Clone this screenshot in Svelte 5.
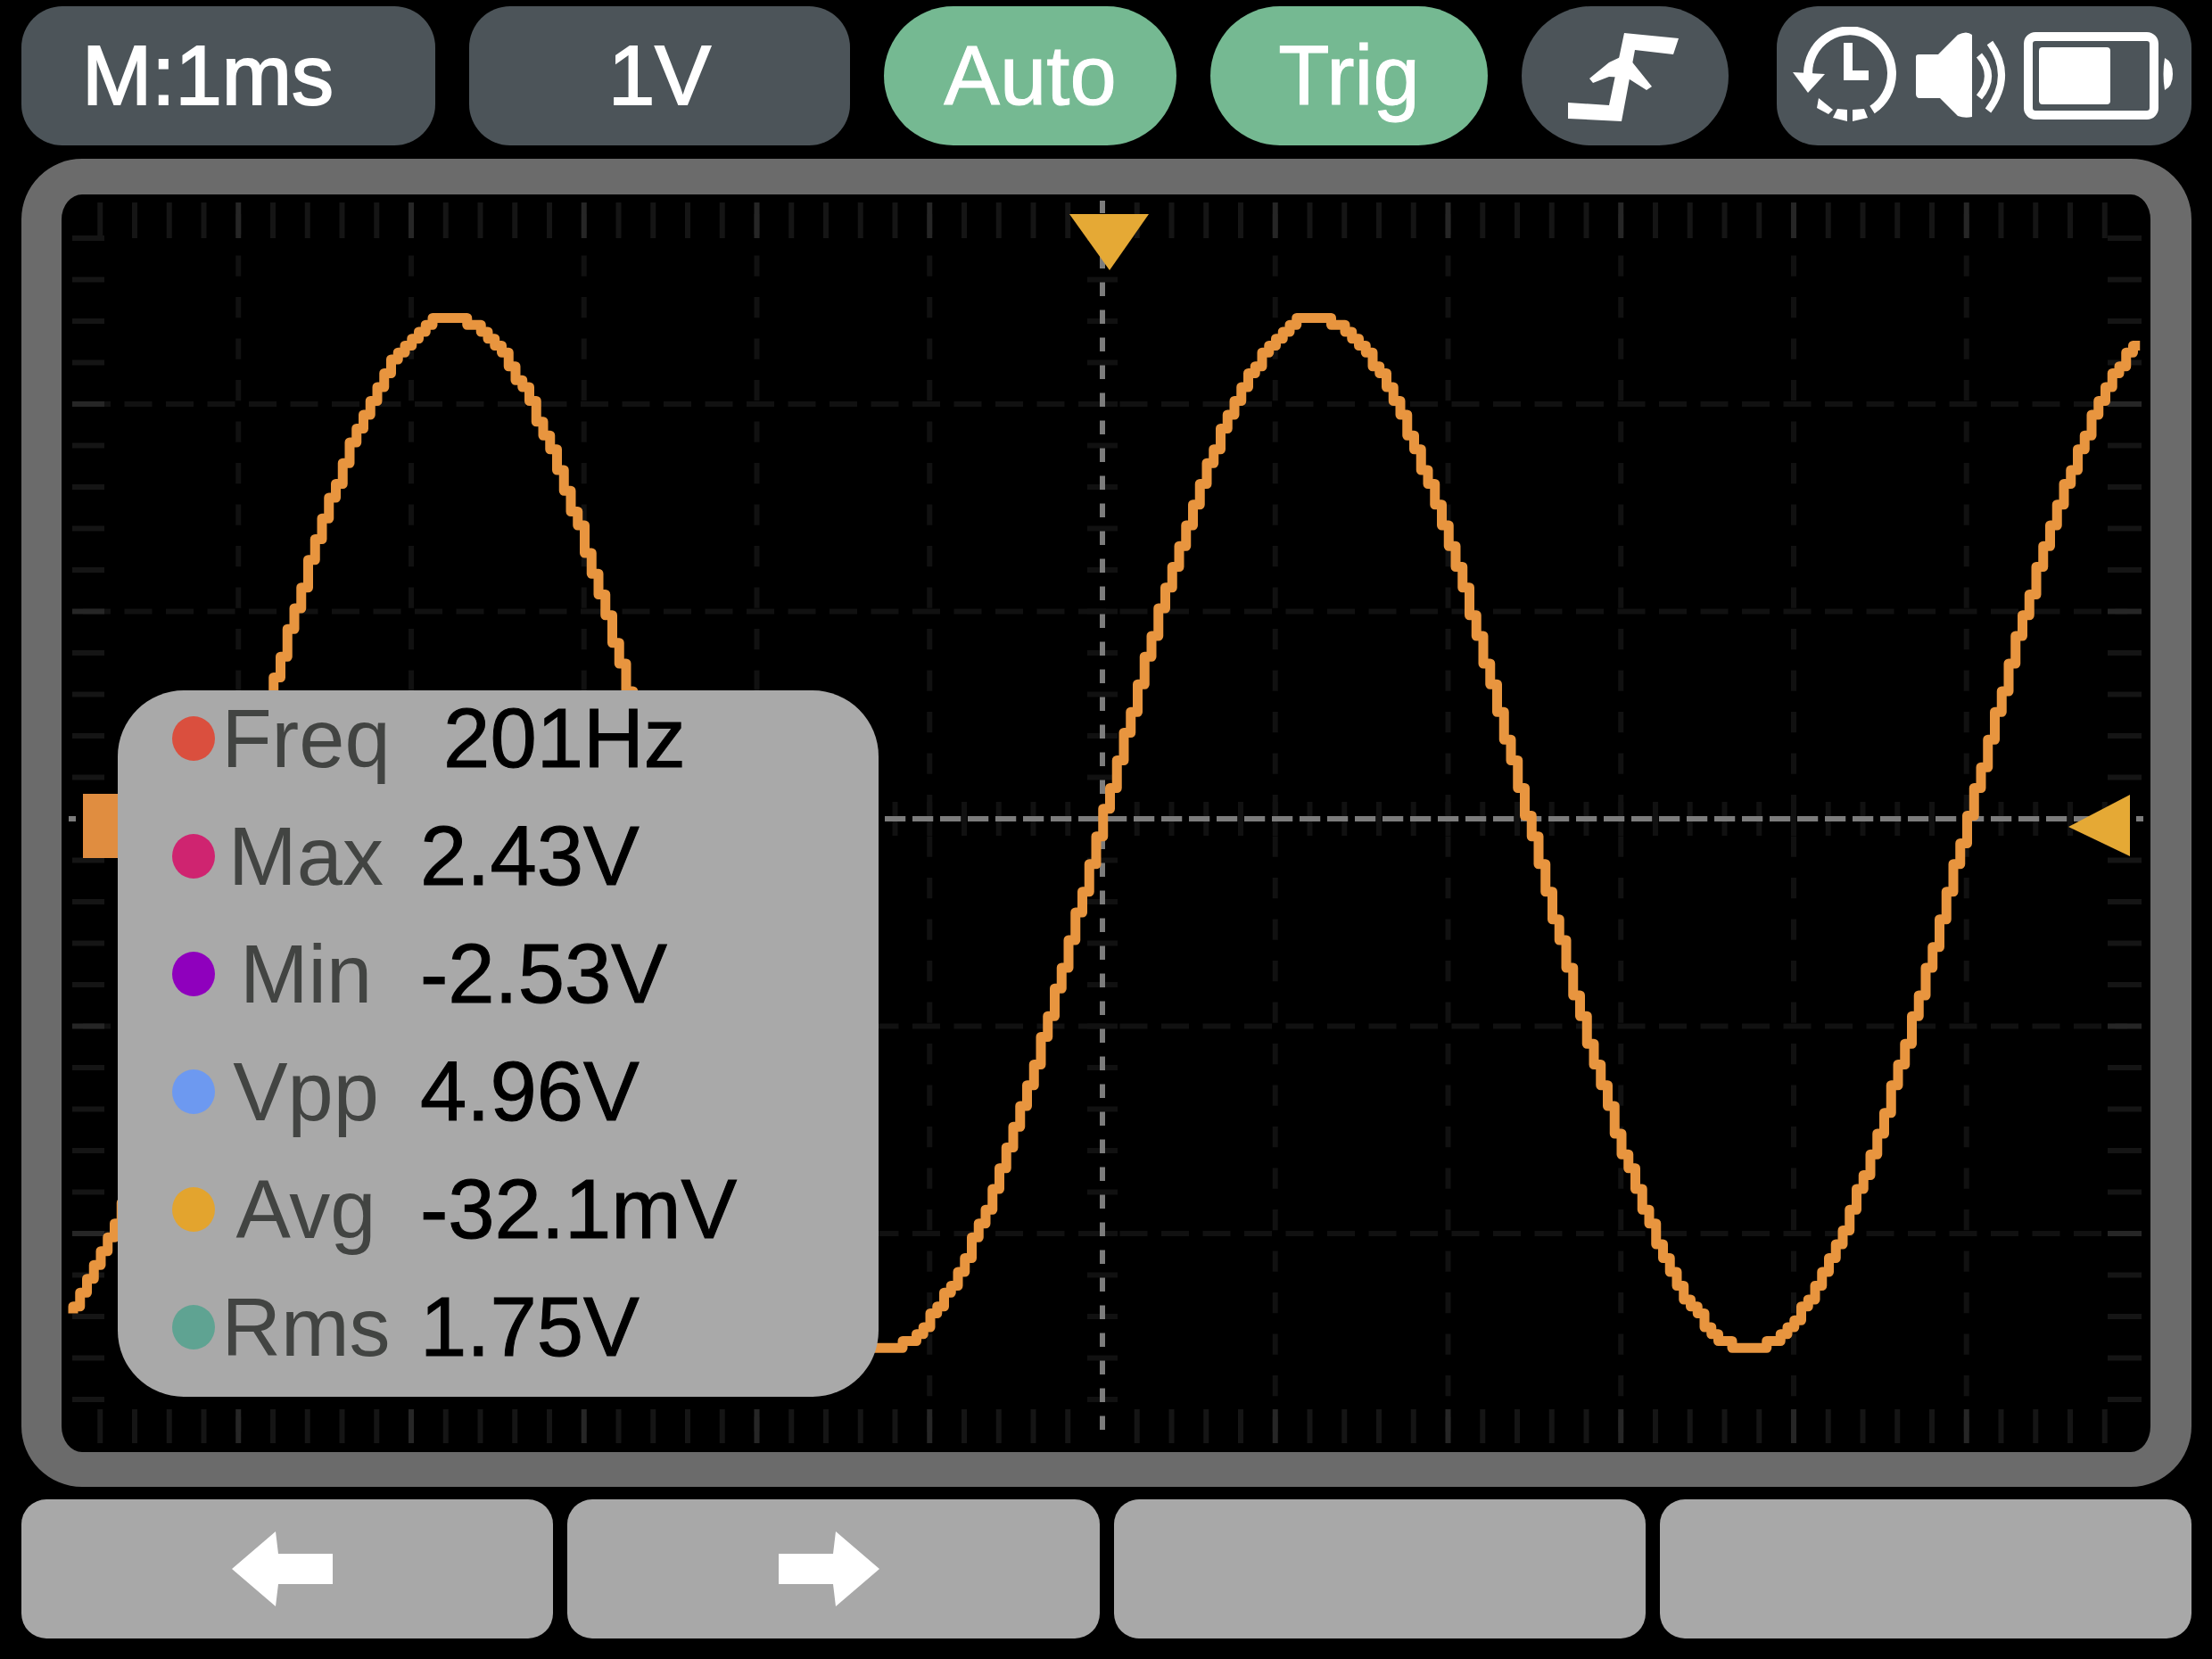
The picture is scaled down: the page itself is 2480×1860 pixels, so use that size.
<script>
  const readings = [
    { name: 'Freq', value: ' 201Hz', tone: 'red' },
    { name: 'Max', value: '2.43V', tone: 'magenta' },
    { name: 'Min', value: '-2.53V', tone: 'violet' },
    { name: 'Vpp', value: '4.96V', tone: 'blue' },
    { name: 'Avg', value: '-32.1mV', tone: 'amber' },
    { name: 'Rms', value: '1.75V', tone: 'teal' }
  ];

  // The display has 320 x 240 dots; one dot is 7.75 drawing units.
  const dot = 7.75;
  const cx = 1236;
  const cy = 918;

  const range = (from, to) => Array.from({ length: to - from + 1 }, (_, i) => from + i);
  const columns = range(-29, 29).map((k) => ({ x: cx + k * dot * 5, major: k % 5 === 0, centre: k === 0 }));
  const rows = range(-14, 14).map((k) => ({ y: cy + k * dot * 6, major: k % 5 === 0, centre: k === 0 }));
  const majorColumns = columns.filter((c) => c.major && !c.centre);
  const majorRows = rows.filter((r) => r.major && !r.centre);

  // Stepped sine trace, snapped to display dots.
  function trace() {
    const level = (x) => {
      const y = 934 - 578 * Math.sin((2 * Math.PI * (x - 1238)) / 970);
      return Math.round(y / dot) * dot;
    };
    let x = 82;
    let d = `M${x} ${level(x)}`;
    while (x < 2392) {
      x += dot;
      d += `V${level(x)}H${x}`;
    }
    return d;
  }
  const wave = trace();
</script>

<main class="scope">
  <header class="status">
    <div class="pill heavy timebase">M:1ms</div>
    <div class="pill heavy">1V</div>
    <div class="pill round green">Auto</div>
    <div class="pill round green">Trig</div>
    <div class="pill round">
      <svg class="edge" viewBox="6 7 232 156" role="img" aria-label="Rising edge">
        <path d="M58 115L104 118L121 37L182 43L176 61L133 56L118 136L58 133Z" />
        <path d="M123 61L152 97L146 101L124 87L104 86L86 93L82 88L104 70Z" />
      </svg>
    </div>
    <div class="pill system">
      <svg class="clock" viewBox="0 0 118 110" role="img" aria-label="History">
        <path class="line" d="M17 53A47 48 0 1 1 89 93" />
        <path d="M0 51L36 53L17 74Z" />
        <path d="M29 80L45 93L40 98L27 91Z" />
        <path d="M50 92L61 93V106L45 102Z" />
        <path d="M67 93L80 92L84 102L67 106Z" />
        <path d="M57 18H67V49H85V60H57Z" />
      </svg>
      <svg class="speaker" viewBox="0 0 106 100" role="img" aria-label="Sound on">
        <path d="M3 29Q3 26 6 26H28L50 4Q60 -1 66 4V96Q58 98 50 95L30 75H6Q3 74 3 70Z" />
        <path class="line" d="M74 27Q94 50 74 74M86 13Q113 50 84 89" />
      </svg>
      <svg class="battery" viewBox="0 0 172 100" role="img" aria-label="Battery">
        <rect class="line" x="6" y="6" width="141" height="88" rx="8" />
        <rect x="18" y="18" width="80" height="64" rx="4" />
        <path d="M159 30Q168 34 168 48T159 66Q156 48 159 30Z" />
      </svg>
    </div>
  </header>

  <section class="frame" aria-label="Waveform">
    <svg class="plot" viewBox="69 218 2342 1410" preserveAspectRatio="none" role="img" aria-label="Sine wave trace">
      <g class="grid">
        {#each majorColumns as c}
          <path class="faint" d="M{c.x} 240V1605" stroke-dasharray="23.25 23.25" />
        {/each}
        {#each majorRows as r}
          <path class="faint" d="M93 {r.y}H2385" stroke-dasharray="31 15.5" />
        {/each}
        {#each columns as c}
          {#if !c.centre}
            <path class:major={c.major} d="M{c.x} 227V267M{c.x} 1580V1618" />
            <path class="faint" d="M{c.x} 899V937" />
          {/if}
        {/each}
        {#each rows as r}
          {#if !r.centre}
            <path class:major={r.major} d="M81 {r.y}H117M2363 {r.y}H2401" />
            <path class="faint" d="M1219 {r.y}H1253" />
          {/if}
        {/each}
      </g>
      <path class="axis" d="M{cx} 225V1606" stroke-dasharray="15.5 15.5" stroke-dashoffset="1.5" />
      <path class="axis" d="M93 {cy}H2385" stroke-dasharray="23.25 7.75" />
      <path class="axis" d="M77 {cy}H85M2395 {cy}H2403" />
      <path class="wave" d={wave} />
      <rect class="channel" x="93" y="890" width="60" height="72" />
      <path class="marker" d="M1199 240H1288L1244 303Z" />
      <path class="marker" d="M2388 891V960L2319 927Z" />
    </svg>

    <dl class="readings">
      {#each readings as r}
        <div class="reading">
          <span class="bullet {r.tone}"></span>
          <dt>{r.name}</dt>
          <dd>{r.value}</dd>
        </div>
      {/each}
    </dl>
  </section>

  <nav class="softkeys" aria-label="Soft keys">
    <button type="button" aria-label="Previous">
      <svg class="arrow" viewBox="0 0 114 84" aria-hidden="true">
        <path d="M0 42L49 0L52 25H113V59H52L49 84Z" />
      </svg>
    </button>
    <button type="button" aria-label="Next">
      <svg class="arrow" viewBox="0 0 114 84" aria-hidden="true">
        <path d="M114 42L65 0L62 25H1V59H62L65 84Z" />
      </svg>
    </button>
    <button type="button" aria-label="Soft key 3"></button>
    <button type="button" aria-label="Soft key 4"></button>
  </nav>
</main>

<style>
  :global(body) {
    margin: 0;
    background: #000;
  }

  .scope {
    box-sizing: border-box;
    display: flex;
    flex-direction: column;
    min-height: 100vh;
    padding: 7px 23px 23px 24px;
    font-family: 'Liberation Sans', Arial, sans-serif;
    color: #fff;
    background: #000;
  }

  .status {
    display: grid;
    grid-template-columns: 464fr 427fr 328fr 311fr 232fr 481fr;
    column-gap: 38px;
    margin-bottom: 15px;
  }

  .pill {
    display: flex;
    align-items: center;
    justify-content: center;
    height: 156px;
    border-radius: 46px;
    background: #4c5459;
    font-size: 94px;
    line-height: 156px;
  }

  .heavy {
    -webkit-text-stroke: 2px #fff;
  }

  .timebase {
    justify-content: flex-start;
    padding-left: 68px;
  }

  .round {
    border-radius: 78px;
  }

  .green {
    background: #75b992;
    -webkit-text-stroke: 1px #fff;
  }

  .system {
    justify-content: space-between;
    margin-left: 16px;
    padding: 0 17px 0 18px;
  }

  svg {
    display: block;
    fill: #fff;
  }

  .line {
    fill: none;
    stroke: #fff;
    stroke-width: 10;
  }

  .speaker .line {
    stroke-width: 8;
  }

  .edge {
    width: 232px;
    height: 156px;
  }

  .clock {
    width: 118px;
    height: 110px;
  }

  .speaker {
    width: 106px;
    height: 100px;
  }

  .battery {
    width: 172px;
    height: 100px;
  }

  .frame {
    position: relative;
    flex: 1;
    display: grid;
    grid-template-rows: minmax(0, 1fr);
    border: solid #6b6b6b;
    border-width: 40px 46px 39px 45px;
    border-radius: 68px;
    background: #000;
  }

  .plot {
    width: 100%;
    height: 100%;
  }

  .grid path {
    stroke: #151515;
    stroke-width: 6;
  }

  .grid .faint {
    stroke: #111;
  }

  .grid .major {
    stroke: #262626;
  }

  .axis {
    stroke: #7c7c7c;
    stroke-width: 6;
  }

  .wave {
    fill: none;
    stroke: #e8953f;
    stroke-width: 11;
    stroke-linejoin: round;
  }

  .channel {
    fill: #e08d40;
  }

  .marker {
    fill: #e5a935;
  }

  .readings {
    position: absolute;
    left: 63px;
    top: 556px;
    width: 853px;
    margin: 0;
    border-radius: 74px;
    background: #a9a9a9;
    font-size: 92px;
    line-height: 108px;
  }

  .reading {
    display: grid;
    grid-template-columns: 48px 204px 1fr;
    align-items: center;
    padding: 0 0 24px 61px;
  }

  .bullet {
    width: 48px;
    height: 50px;
    border-radius: 50%;
  }

  .red {
    background: #da4f3e;
  }

  .magenta {
    background: #cf2470;
  }

  .violet {
    background: #8f00bd;
  }

  .blue {
    background: #6d99f0;
  }

  .amber {
    background: #e3a42e;
  }

  .teal {
    background: #5fa392;
  }

  dt {
    text-align: center;
    color: #424442;
  }

  dd {
    margin: 0 0 0 26px;
    color: #000;
    font-size: 94px;
    -webkit-text-stroke: 1px #000;
    white-space: pre;
  }

  .softkeys {
    display: grid;
    grid-template-columns: repeat(4, 1fr);
    column-gap: 16px;
    margin-top: 14px;
  }

  button {
    display: flex;
    align-items: center;
    justify-content: center;
    height: 156px;
    padding: 0 10px 0 0;
    border: 0;
    border-radius: 28px;
    background: #a8a8a8;
  }

  .arrow {
    width: 114px;
    height: 84px;
  }
</style>
